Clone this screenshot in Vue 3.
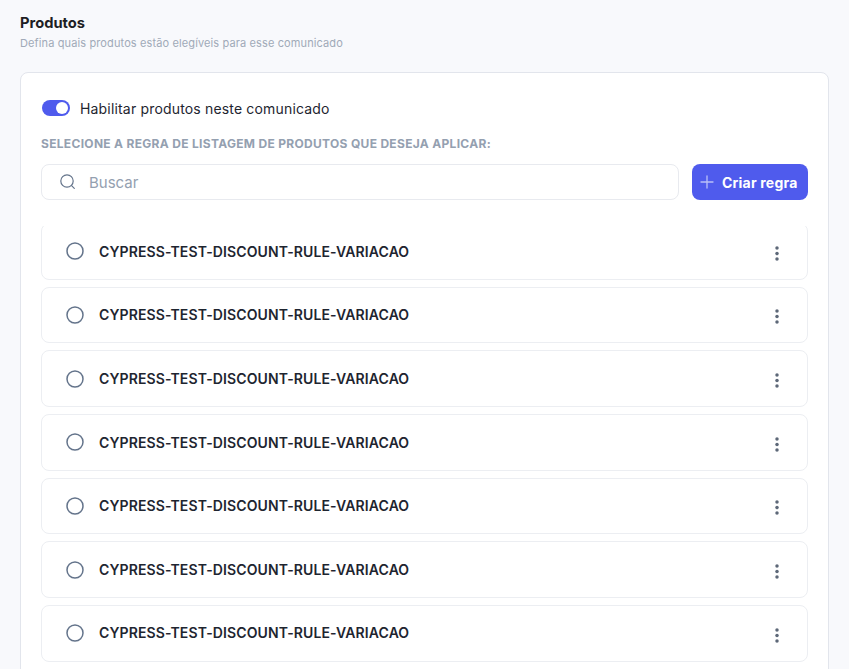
<script setup>
const rows = Array.from({ length: 7 }, (_, i) => ({ id: i, name: 'CYPRESS-TEST-DISCOUNT-RULE-VARIACAO' }))
</script>

<template>
  <main class="page">
    <h1 class="title">Produtos</h1>
    <p class="subtitle">Defina quais produtos estão elegíveis para esse comunicado</p>
    <section class="card">
      <div class="toggle-row">
        <span class="toggle"><span class="knob"></span></span>
        <span class="toggle-label">Habilitar produtos neste comunicado</span>
      </div>
      <h2 class="rule-title">SELECIONE A REGRA DE LISTAGEM DE PRODUTOS QUE DESEJA APLICAR:</h2>
      <div class="toolbar">
        <label class="search">
          <svg class="search-icon" width="18" height="18" viewBox="0 0 18 18" fill="none" stroke="#64748b" stroke-width="1.2" stroke-linecap="round">
            <circle cx="8" cy="8" r="6.2" />
            <path d="M12.6 12.6l2.7 2.7" />
          </svg>
          <span class="placeholder">Buscar</span>
        </label>
        <button class="create" type="button">
          <svg width="14" height="14" viewBox="0 0 14 14" fill="none" stroke="#b9c0f7" stroke-width="1.3" stroke-linecap="round">
            <path d="M7 1v12M1 7h12" />
          </svg>
          <span>Criar regra</span>
        </button>
      </div>
      <div class="list">
        <div class="list-inner">
          <div v-for="row in rows" :key="row.id" class="row">
            <svg class="radio" width="18" height="18" viewBox="0 0 18 18" fill="none" stroke="#64748b" stroke-width="1.5">
              <circle cx="9" cy="9" r="8" />
            </svg>
            <span class="name">{{ row.name }}</span>
            <svg class="more" width="4" height="15" viewBox="0 0 4 15" fill="#5d6878">
              <circle cx="2" cy="2" r="1.75" />
              <circle cx="2" cy="7.5" r="1.75" />
              <circle cx="2" cy="13" r="1.75" />
            </svg>
          </div>
        </div>
      </div>
    </section>
  </main>
</template>

<style>
html, body { margin: 0; background: #f8f9fc; overflow: hidden; }
</style>

<style scoped>
.page {
  height: 669px;
  box-sizing: border-box;
  padding: 14px 20px 0;
  overflow: hidden;
  background: #f8f9fc;
  font-family: Inter, "Liberation Sans", sans-serif;
}
.title {
  margin: 0;
  font-size: 14.7px;
  line-height: 18px;
  font-weight: 700;
  color: #1e1e24;
}
.subtitle {
  margin: 4px 0 0;
  font-size: 11px;
  letter-spacing: 0.12px;
  line-height: 14px;
  color: #a0aab8;
}
.card {
  margin-top: 22px;
  box-sizing: border-box;
  width: 809px;
  height: 640px;
  padding: 26px 20px 0 20px;
  background: #fff;
  border: 1px solid #e2e5ec;
  border-radius: 8px;
}
.toggle-row {
  display: flex;
  align-items: center;
  gap: 10px;
  margin-left: 1px;
  height: 18px;
}
.toggle {
  width: 28px;
  height: 16px;
  border-radius: 8px;
  background: #4f5bed;
  position: relative;
  flex: none;
}
.knob {
  position: absolute;
  right: 2px;
  top: 2px;
  width: 12px;
  height: 12px;
  border-radius: 50%;
  background: #fff;
}
.toggle-label {
  font-size: 14px;
  letter-spacing: 0.17px;
  color: #1e2530;
}
.rule-title {
  margin: 18px 0 0;
  font-size: 12px;
  letter-spacing: 0.31px;
  line-height: 18px;
  font-weight: 700;
  color: #94a0b0;
}
.toolbar {
  display: flex;
  gap: 13px;
  margin-top: 11px;
}
.search {
  flex: 1;
  height: 36px;
  box-sizing: border-box;
  display: flex;
  align-items: center;
  gap: 12px;
  padding-left: 17px;
  border: 1px solid #e8eaef;
  border-radius: 8px;
}
.placeholder {
  font-size: 15px;
  color: #94a0b0;
}
.create {
  width: 116px;
  height: 36px;
  display: flex;
  align-items: center;
  gap: 8px;
  border: 0;
  padding: 0 0 0 8px;
  border-radius: 8px;
  background: #4f5bed;
  color: #fff;
  font: 700 14px Inter, "Liberation Sans", sans-serif;
  letter-spacing: 0.2px;
}
.list {
  margin-top: 26px;
  height: 443px;
  overflow: hidden;
}
.list-inner {
  margin-top: -3px;
  display: flex;
  flex-direction: column;
  gap: 7px;
}
.row {
  box-sizing: border-box;
  height: 56.67px;
  flex: none;
  display: flex;
  align-items: center;
  padding: 0 24px;
  border: 1px solid #eceef2;
  border-radius: 8px;
}
.radio {
  flex: none;
  margin-right: 15px;
}
.name {
  flex: 1;
  margin-bottom: 0.6px;
  font-size: 14px;
  letter-spacing: 0.11px;
  font-weight: 600;
  color: #1e2530;
}
.more {
  flex: none;
  margin-right: 4px;
  margin-top: 4px;
}
</style>
